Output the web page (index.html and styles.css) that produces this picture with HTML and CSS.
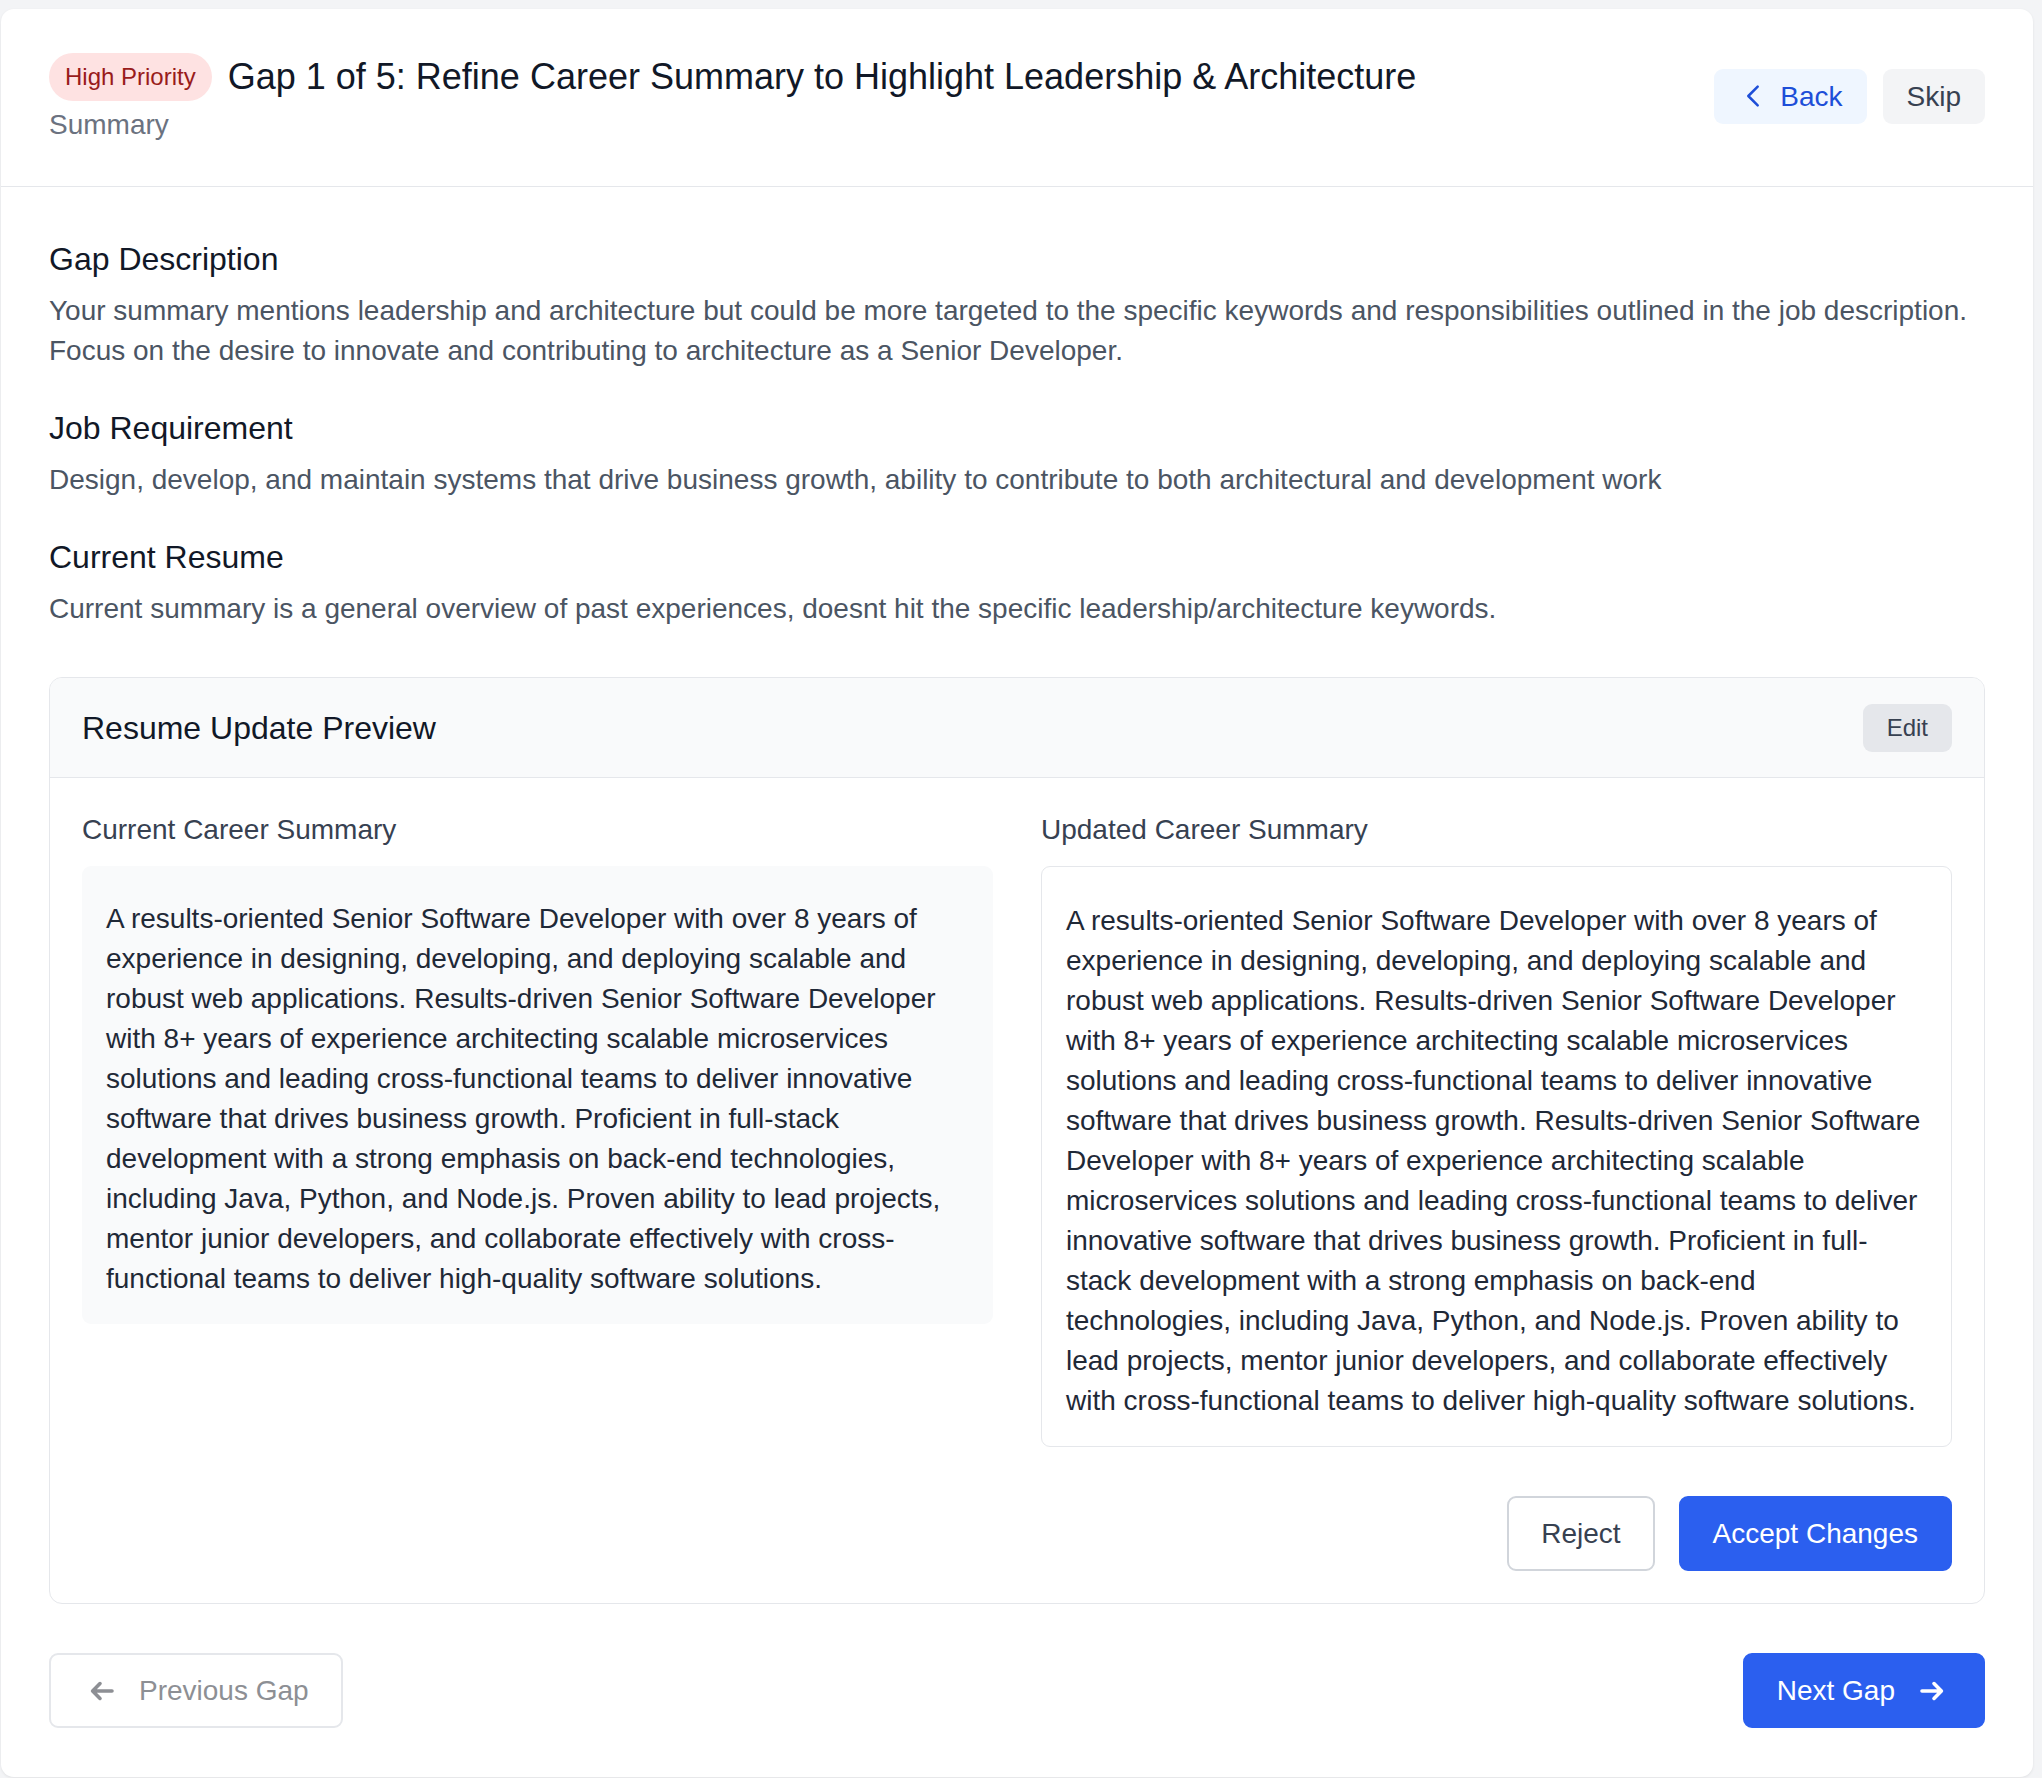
FILE: index.html
```html
<!DOCTYPE html>
<html lang="en">
<head>
<meta charset="utf-8">
<title>Gap 1 of 5</title>
<link rel="stylesheet" href="styles.css">
</head>
<body>
<div class="card">
  <header class="header">
    <div class="header-main">
      <div class="title-row">
        <span class="badge">High Priority</span>
        <h1 class="title">Gap 1 of 5: Refine Career Summary to Highlight Leadership &amp; Architecture</h1>
      </div>
      <div class="subtitle">Summary</div>
    </div>
    <div class="actions">
      <button class="btn btn-back">
        <svg class="icon-chev" viewBox="0 0 24 24" width="30" height="30" fill="none" stroke="currentColor" stroke-width="2" stroke-linecap="round" stroke-linejoin="round"><path d="M15.75 19.5L8.25 12l7.5-7.5"/></svg>
        <span>Back</span>
      </button>
      <button class="btn btn-skip">Skip</button>
    </div>
  </header>

  <main class="content">
    <section class="section">
      <h2 class="section-title">Gap Description</h2>
      <p class="section-text">Your summary mentions leadership and architecture but could be more targeted to the specific keywords and responsibilities outlined in the job description. Focus on the desire to innovate and contributing to architecture as a Senior Developer.</p>
    </section>
    <section class="section">
      <h2 class="section-title">Job Requirement</h2>
      <p class="section-text">Design, develop, and maintain systems that drive business growth, ability to contribute to both architectural and development work</p>
    </section>
    <section class="section">
      <h2 class="section-title">Current Resume</h2>
      <p class="section-text">Current summary is a general overview of past experiences, doesnt hit the specific leadership/architecture keywords.</p>
    </section>

    <div class="preview">
      <div class="preview-header">
        <h3 class="preview-title">Resume Update Preview</h3>
        <button class="btn btn-edit">Edit</button>
      </div>
      <div class="preview-body">
        <div class="columns">
          <div class="column">
            <div class="col-label">Current Career Summary</div>
            <div class="box box-current">A results-oriented Senior Software Developer with over 8 years of experience in designing, developing, and deploying scalable and robust web applications. Results-driven Senior Software Developer with 8+ years of experience architecting scalable microservices solutions and leading cross-functional teams to deliver innovative software that drives business growth. Proficient in full-stack development with a strong emphasis on back-end technologies, including Java, Python, and Node.js. Proven ability to lead projects, mentor junior developers, and collaborate effectively with cross-functional teams to deliver high-quality software solutions.</div>
          </div>
          <div class="column">
            <div class="col-label">Updated Career Summary</div>
            <div class="box box-updated">A results-oriented Senior Software Developer with over 8 years of experience in designing, developing, and deploying scalable and robust web applications. Results-driven Senior Software Developer with 8+ years of experience architecting scalable microservices solutions and leading cross-functional teams to deliver innovative software that drives business growth. Results-driven Senior Software Developer with 8+ years of experience architecting scalable microservices solutions and leading cross-functional teams to deliver innovative software that drives business growth. Proficient in full-stack development with a strong emphasis on back-end technologies, including Java, Python, and Node.js. Proven ability to lead projects, mentor junior developers, and collaborate effectively with cross-functional teams to deliver high-quality software solutions.</div>
          </div>
        </div>
        <div class="decision">
          <button class="btn btn-reject">Reject</button>
          <button class="btn btn-accept">Accept Changes</button>
        </div>
      </div>
    </div>

    <nav class="footer-nav">
      <button class="btn btn-prev">
        <svg class="icon-arrow" viewBox="0 0 24 20" width="24" height="20" fill="none" stroke="currentColor" stroke-width="3.6" stroke-linecap="round" stroke-linejoin="round"><path d="M22 10H3.5M10 2.6L2.6 10l7.4 7.4"/></svg>
        <span>Previous Gap</span>
      </button>
      <button class="btn btn-next">
        <span>Next Gap</span>
        <svg class="icon-arrow" viewBox="0 0 24 20" width="24" height="20" fill="none" stroke="currentColor" stroke-width="3.6" stroke-linecap="round" stroke-linejoin="round"><path d="M2 10h18.5M14 2.6l7.4 7.4-7.4 7.4"/></svg>
      </button>
    </nav>
  </main>
</div>
</body>
</html>
```

FILE: styles.css
```css
* { box-sizing: border-box; }

body {
  margin: 0;
  padding: 9px 9px 2px 1px;
  background: #f3f4f6;
  font-family: "Liberation Sans", Arial, Helvetica, sans-serif;
  color: #111827;
}

.card {
  background: #ffffff;
  border-radius: 13px;
  box-shadow: 0 1px 3px rgba(0, 0, 0, 0.08);
}

.header {
  display: flex;
  justify-content: space-between;
  align-items: center;
  padding: 44px 48px 41px 48px;
  border-bottom: 1px solid #e5e7eb;
}

.title-row {
  display: flex;
  align-items: center;
  gap: 16px;
}

.badge {
  font-size: 24px;
  line-height: 32px;
  padding: 8px 16px;
  border-radius: 9999px;
  background: #fee2e2;
  color: #991b1b;
}

.title {
  margin: 0;
  font-size: 36px;
  line-height: 48px;
  font-weight: 400;
  color: #111827;
}

.subtitle {
  margin-top: 4px;
  font-size: 28px;
  line-height: 40px;
  color: #6b7280;
}

.actions {
  display: flex;
  gap: 16px;
  margin-bottom: 6px;
}

.btn {
  font-family: inherit;
  cursor: pointer;
  border: none;
  margin: 0;
}

.btn-back,
.btn-skip {
  display: flex;
  align-items: center;
  font-size: 28px;
  line-height: 41px;
  padding: 7px 24px;
  border-radius: 9px;
}

.btn-back {
  gap: 12px;
  background: #eff6ff;
  color: #1d4ed8;
}

.btn-skip {
  background: #f3f4f6;
  color: #374151;
}

.icon-chev { display: block; flex: none; }

.content {
  display: block;
  padding: 50px 48px 49px 48px;
}

.section + .section { margin-top: 35px; }

.section-title {
  margin: 0 0 10px 0;
  font-size: 32px;
  line-height: 44px;
  font-weight: 400;
  color: #111827;
}

.section-text {
  margin: 0;
  font-size: 28px;
  line-height: 40px;
  color: #4b5563;
}

.preview {
  margin-top: 48px;
  border: 1px solid #e5e7eb;
  border-radius: 13px;
  overflow: hidden;
}

.preview-header {
  display: flex;
  justify-content: space-between;
  align-items: center;
  padding: 26px 32px 25px 32px;
  background: #f9fafb;
  border-bottom: 1px solid #e5e7eb;
}

.preview-title {
  margin: 0;
  font-size: 32px;
  line-height: 44px;
  font-weight: 400;
  color: #111827;
}

.btn-edit {
  font-size: 24px;
  line-height: 32px;
  padding: 8px 24px;
  border-radius: 9px;
  background: #e5e7eb;
  color: #374151;
}

.preview-body {
  padding: 32px;
}

.columns {
  display: grid;
  grid-template-columns: 1fr 1fr;
  gap: 48px;
  align-items: start;
}

.col-label {
  font-size: 28px;
  line-height: 40px;
  color: #374151;
  margin-bottom: 16px;
}

.box {
  font-size: 28px;
  line-height: 40px;
  color: #1f2937;
  border-radius: 9px;
}

.box-current {
  background: #f9fafb;
  padding: 33px 24px 25px 24px;
}

.box-updated {
  background: #ffffff;
  border: 1px solid #e5e7eb;
  padding: 34px 24px 25px 24px;
}

.decision {
  display: flex;
  justify-content: flex-end;
  gap: 24px;
  margin-top: 49px;
}

.btn-reject,
.btn-accept,
.btn-prev,
.btn-next {
  display: flex;
  align-items: center;
  font-size: 28px;
  line-height: 43px;
  padding: 14px 32px;
  border-radius: 9px;
  border: 2px solid transparent;
}

.btn-reject {
  background: #ffffff;
  border-color: #d1d5db;
  color: #374151;
}

.btn-accept {
  background: #2b5fef;
  border-color: #2b5fef;
  color: #ffffff;
}

.footer-nav {
  display: flex;
  justify-content: space-between;
  margin-top: 49px;
}

.btn-prev {
  gap: 25px;
  background: #ffffff;
  border-color: #e5e7eb;
  color: #8d8f94;
}

.btn-prev .icon-arrow { margin-left: 7px; }

.btn-next {
  gap: 25px;
  background: #2b5fef;
  border-color: #2b5fef;
  color: #ffffff;
}

.btn-next .icon-arrow { margin-right: 7px; }

.icon-arrow { display: block; flex: none; }
```
